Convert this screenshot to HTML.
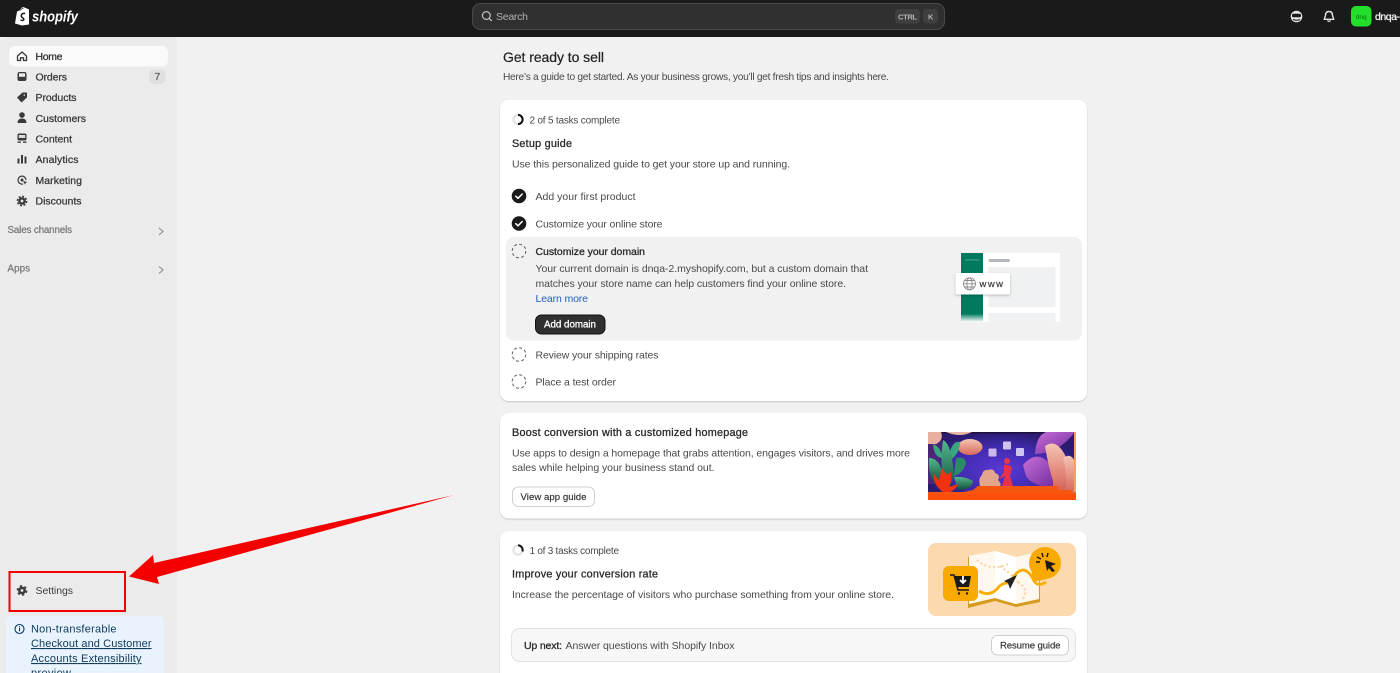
<!DOCTYPE html>
<html><head><meta charset="utf-8"><title>Shopify admin</title>
<style>
html,body{margin:0;padding:0;width:1400px;height:673px;overflow:hidden;background:#f1f1f1}
svg{display:block}
#root{filter:blur(.35px)}
text{font-family:"Liberation Sans",sans-serif;font-size:10.5px;fill:#303030}
.nav{fill:#3a3a3a;stroke:#3a3a3a;stroke-width:.28;font-size:10.5px}
.b{fill:#2a2a2a;stroke:#2a2a2a;stroke-width:.3}
.t{fill:#4a4a4a}
.cap{font-weight:700;fill:#b5b5b5;font-size:7.500px}
</style></head><body>
<svg id="root" width="1400" height="673" viewBox="0 0 1400 673" xmlns="http://www.w3.org/2000/svg">
<defs>
<linearGradient id="fade" x1="0" y1="0" x2="0" y2="1"><stop offset="0.88" stop-color="#007a5e"/><stop offset="1" stop-color="#007a5e" stop-opacity="0"/></linearGradient>
<radialGradient id="sky" cx="0.5" cy="0.55" r="0.55"><stop offset="0" stop-color="#5a38d8"/><stop offset="0.65" stop-color="#3e2aa8"/><stop offset="1" stop-color="#2a1b70"/></radialGradient>
<linearGradient id="petal" x1="0" y1="0" x2="0" y2="1"><stop offset="0" stop-color="#f3c4b4"/><stop offset="1" stop-color="#d9685c"/></linearGradient>
<linearGradient id="purp" x1="0" y1="0" x2="1" y2="1"><stop offset="0" stop-color="#c86fd8"/><stop offset="1" stop-color="#6d2a9c"/></linearGradient>
<linearGradient id="leaf" x1="0" y1="0" x2="0" y2="1"><stop offset="0" stop-color="#52b88c"/><stop offset="1" stop-color="#124a3a"/></linearGradient>
<filter id="sh" x="-10%" y="-10%" width="120%" height="125%"><feDropShadow dx="0" dy="1" stdDeviation="0.8" flood-color="#000" flood-opacity="0.18"/></filter>
<filter id="sh2" x="-10%" y="-20%" width="120%" height="150%"><feDropShadow dx="0" dy="1" stdDeviation="1.2" flood-color="#000" flood-opacity="0.25"/></filter>
</defs>

<!-- page -->
<rect width="1400" height="673" fill="#f1f1f1"/>
<rect width="1400" height="37" fill="#1a1a1a"/>
<path d="M0 46Q0 37 9 37H177V673H0Z" fill="#ebebeb"/>

<!-- logo -->
<path d="M15 23.500L17 11.500L20 10.200Q21.500 6.800 23.800 7.200L27 8.500L29 9.500V24.500L22 25.500Z" fill="#fff"/>
<path d="M20.500 10.500Q21.500 8.300 23.500 8.300" stroke="#1a1a1a" stroke-width=".7" fill="none"/>
<path d="M25.200 13.500Q22 13 21.300 15.300Q21 17 22.800 18Q24.300 18.900 23.600 20Q22.600 21 20.500 20" stroke="#1a1a1a" stroke-width="1.500" fill="none"/>
<text x="32" y="21.500" style="font-size:14.500px;font-weight:700;font-style:italic;fill:#fff" textLength="46" lengthAdjust="spacingAndGlyphs">shopify</text>

<!-- search -->
<rect x="472.500" y="3.500" width="472" height="26" rx="8" fill="#303030" stroke="#4a4a4a" stroke-width="1"/>
<circle cx="486.300" cy="15.500" r="3.900" fill="none" stroke="#c4c4c4" stroke-width="1.200"/>
<path d="M489.200 18.400L491.500 20.700" stroke="#c4c4c4" stroke-width="1.200" stroke-linecap="round"/>
<text x="496" y="20" style="fill:#b0b0b0;font-size:10.500px" textLength="32">Search</text>
<rect x="895" y="9" width="25" height="14.500" rx="3.500" fill="#3f3f3f"/>
<text x="898" y="19.500" class="cap" textLength="19">CTRL</text>
<rect x="923" y="9" width="15" height="14.500" rx="3.500" fill="#3f3f3f"/>
<text x="928" y="19.500" class="cap">K</text>

<!-- top right -->
<circle cx="1296.500" cy="16.500" r="5.800" fill="#e3e3e3"/>
<rect x="1292" y="13.800" width="9" height="3.400" rx="1.500" fill="#1a1a1a"/>
<path d="M1293 19.500Q1296.500 21 1300 19.500" stroke="#1a1a1a" stroke-width="1" fill="none"/>
<path d="M1329 11.500Q1332.500 11.500 1332.500 15.500L1333.800 19.300H1324.200L1325.500 15.500Q1325.500 11.500 1329 11.500Z" fill="none" stroke="#e3e3e3" stroke-width="1.400" stroke-linejoin="round"/>
<path d="M1327.400 20.500Q1329 22.300 1330.600 20.500" stroke="#e3e3e3" stroke-width="1.200" fill="none"/>
<rect x="1351" y="6" width="20.500" height="20.500" rx="5" fill="#22e02a"/>
<text x="1355.800" y="19" style="font-size:6.500px;fill:#0e6b16">dnq</text>
<text x="1375" y="20" style="fill:#f0f0f0;stroke:#f0f0f0;stroke-width:.3;font-size:10.500px" textLength="25">dnqa-</text>

<!-- sidebar nav -->
<rect x="9" y="46" width="159" height="20.500" rx="6" fill="#fafafa"/>
<g fill="#3a3a3a">
<path d="M17.500 56L22 52L26.500 56V60.500H23.500V57.800H20.500V60.500H17.500Z" fill="none" stroke="#3a3a3a" stroke-width="1.300" stroke-linejoin="round"/>
<path d="M17.500 74Q17.500 72 19.500 72H24.500Q26.500 72 26.500 74V79Q26.500 81 24.500 81H19.500Q17.500 81 17.500 79Z"/>
<rect x="19" y="73.300" width="6" height="3.500" fill="#ebebeb"/>
<path d="M17 97.500L22.500 92.500H27V97.500L21.500 102.500Z"/>
<circle cx="22" cy="115" r="2.800"/>
<path d="M17.500 123Q17.500 118.500 22 118.500Q26.500 118.500 26.500 123Z"/>
<rect x="17.500" y="133.500" width="9" height="7" rx="1.500"/>
<rect x="18.800" y="135" width="6.400" height="3" fill="#dcdcdc"/>
<rect x="17.500" y="141.500" width="3.500" height="1.300"/><rect x="23" y="141.500" width="3.500" height="1.300"/>
<rect x="17.500" y="158.500" width="2" height="5"/><rect x="21" y="155" width="2" height="8.500"/><rect x="24.500" y="156.500" width="2" height="7"/>
<path d="M26 180A4 4 0 1 0 23 184" fill="none" stroke="#3a3a3a" stroke-width="1.200"/>
<circle cx="22" cy="180" r="1.500"/><path d="M23 181L27.300 182L25.500 183L25 184.800Z"/>
<circle cx="22" cy="201" r="3.800"/>
<circle cx="22" cy="201" r="4.600" fill="none" stroke="#3a3a3a" stroke-width="1.500" stroke-dasharray="2 1.610"/>
</g>
<circle cx="24.300" cy="95" r="0.800" fill="#ebebeb"/>
<circle cx="22" cy="201" r="1.400" fill="#ebebeb"/>
<text x="35.500" y="60" class="nav" style="fill:#2c2c2c" textLength="27">Home</text>
<text x="35.500" y="80.500" class="nav" textLength="31.500">Orders</text>
<text x="35.500" y="101" class="nav" textLength="41">Products</text>
<text x="35.500" y="122" class="nav" textLength="50.500">Customers</text>
<text x="35.500" y="142.500" class="nav" textLength="36.500">Content</text>
<text x="35.500" y="163" class="nav" textLength="43">Analytics</text>
<text x="35.500" y="184" class="nav" textLength="46.500">Marketing</text>
<text x="35.500" y="204.500" class="nav" textLength="46">Discounts</text>
<rect x="149" y="69.500" width="16.500" height="14.500" rx="5" fill="#e0e0e0"/>
<text x="154.500" y="80" style="fill:#616161;stroke:#616161;stroke-width:.25">7</text>
<text x="7.500" y="233" style="fill:#7a7a7a;stroke:#7a7a7a;stroke-width:.25;font-size:9.800px" textLength="64.500">Sales channels</text>
<path d="M159 228L163 231.500L159 235" stroke="#8a8a8a" stroke-width="1.100" fill="none"/>
<text x="7.500" y="271.500" style="fill:#7a7a7a;stroke:#7a7a7a;stroke-width:.25;font-size:9.800px" textLength="22.500">Apps</text>
<path d="M159 266.500L163 270L159 273.500" stroke="#8a8a8a" stroke-width="1.100" fill="none"/>

<!-- settings -->
<circle cx="22" cy="590.500" r="3.900" fill="#3a3a3a"/>
<circle cx="22" cy="590.500" r="4.600" fill="none" stroke="#3a3a3a" stroke-width="1.500" stroke-dasharray="2.400 2.420"/>
<circle cx="22" cy="590.500" r="1.400" fill="#ebebeb"/>
<text x="35.500" y="594" style="fill:#3f3f3f" textLength="37.500">Settings</text>
<rect x="9.500" y="572" width="115.500" height="39" fill="none" stroke="#f00000" stroke-width="2"/>

<!-- banner -->
<path d="M6 622Q6 616 12 616H158Q164 616 164 622V673H6Z" fill="#e8f3fd"/>
<circle cx="19.500" cy="629" r="4.500" fill="none" stroke="#0b3a5c" stroke-width="1.100"/>
<rect x="19" y="628" width="1.100" height="3.300" fill="#0b3a5c"/><rect x="19" y="626.200" width="1.100" height="1.100" fill="#0b3a5c"/>
<text x="31" y="632.500" style="fill:#0e3a5a;font-size:11px" textLength="85.500">Non-transferable</text>
<text x="31" y="647" style="fill:#0e3a5a;font-size:11px;text-decoration:underline" textLength="120.500">Checkout and Customer</text>
<text x="31" y="662" style="fill:#0e3a5a;font-size:11px;text-decoration:underline" textLength="110.500">Accounts Extensibility</text>
<text x="31" y="676.500" style="fill:#0e3a5a;font-size:11px;text-decoration:underline" textLength="40">preview</text>

<!-- arrow -->
<path d="M454 495L154 563L153 555L129 576.500L159 584L157 577Z" fill="#f50000"/>

<!-- heading -->
<text x="503" y="62" style="font-size:14px;fill:#222;stroke:#222;stroke-width:.2" textLength="101">Get ready to sell</text>
<text x="503" y="80" class="t" style="font-size:10.200px" textLength="386">Here’s a guide to get started. As your business grows, you’ll get fresh tips and insights here.</text>

<!-- card 1 -->
<rect x="500" y="100" width="587" height="301" rx="9" fill="#fff" filter="url(#sh)"/>
<circle cx="518" cy="119.500" r="4.600" fill="none" stroke="#e2e2e2" stroke-width="2"/>
<path d="M518 114.900A4.600 4.600 0 0 1 518 124.100" fill="none" stroke="#111" stroke-width="2"/>
<text x="529.500" y="123.500" class="t" style="font-size:10px" textLength="90.500">2 of 5 tasks complete</text>
<text x="512" y="147" class="b" style="font-size:10.800px" textLength="60">Setup guide</text>
<text x="512" y="167.500" class="t" textLength="278">Use this personalized guide to get your store up and running.</text>

<circle cx="519" cy="196" r="7.300" fill="#1a1a1a"/>
<path d="M515.800 196.200L518 198.300L522.200 194" stroke="#fff" stroke-width="1.500" fill="none" stroke-linecap="round" stroke-linejoin="round"/>
<text x="535.500" y="200" class="t" textLength="100">Add your first product</text>
<circle cx="519" cy="223.500" r="7.300" fill="#1a1a1a"/>
<path d="M515.800 223.700L518 225.800L522.200 221.500" stroke="#fff" stroke-width="1.500" fill="none" stroke-linecap="round" stroke-linejoin="round"/>
<text x="535.500" y="227.500" class="t" textLength="127">Customize your online store</text>

<rect x="506" y="237" width="576" height="103.500" rx="8" fill="#f1f1f1"/>
<circle cx="519" cy="251" r="6.800" fill="none" stroke="#616161" stroke-width="1" stroke-dasharray="3 2.340"/>
<text x="535.500" y="255" class="b" style="font-size:10.500px" textLength="109.500">Customize your domain</text>
<text x="535.500" y="272" class="t" textLength="332.500">Your current domain is dnqa-2.myshopify.com, but a custom domain that</text>
<text x="535.500" y="287" class="t" textLength="310.500">matches your store name can help customers find your online store.</text>
<text x="535.500" y="302" style="fill:#1f5fc4" textLength="52.500">Learn more</text>
<rect x="535.500" y="315" width="69.500" height="19" rx="6" fill="#303030" stroke="#111" stroke-width="1"/>
<text x="544" y="327.500" style="fill:#fff;stroke:#fff;stroke-width:.3;font-size:9.800px" textLength="52">Add domain</text>

<!-- domain illustration -->
<rect x="961" y="253" width="99" height="69" fill="#fff"/>
<rect x="961" y="253" width="22" height="69" fill="url(#fade)"/>
<rect x="965" y="259.500" width="14" height="0.800" fill="#5fb09a"/>
<rect x="988.500" y="259" width="21.500" height="3" rx="1.500" fill="#b5b8bc"/>
<rect x="988.500" y="267" width="67" height="40" fill="#f0f1f2"/>
<rect x="988.500" y="313" width="67" height="9" fill="#f0f1f2"/>
<rect x="955.500" y="273" width="54.500" height="21.500" rx="1.500" fill="#fff" filter="url(#sh2)"/>
<g fill="none" stroke="#8a8a8a" stroke-width=".9">
<circle cx="969.500" cy="283.800" r="6"/><ellipse cx="969.500" cy="283.800" rx="2.600" ry="6"/><path d="M963.500 283.800H975.500M964.500 280.500H974.500M964.500 287H974.500"/>
</g>
<text x="979.500" y="287" style="font-size:9.500px;fill:#3a3a3a;stroke:#3a3a3a;stroke-width:.2" textLength="23.500">www</text>

<circle cx="519" cy="354.500" r="6.800" fill="none" stroke="#616161" stroke-width="1" stroke-dasharray="3 2.340"/>
<text x="535.500" y="358.500" class="t" textLength="123">Review your shipping rates</text>
<circle cx="519" cy="381.500" r="6.800" fill="none" stroke="#616161" stroke-width="1" stroke-dasharray="3 2.340"/>
<text x="535.500" y="385.500" class="t" textLength="80.500">Place a test order</text>

<!-- card 2 -->
<rect x="500" y="413" width="587" height="105.500" rx="9" fill="#fff" filter="url(#sh)"/>
<text x="512" y="436" class="b" style="font-size:10.800px" textLength="236">Boost conversion with a customized homepage</text>
<text x="512" y="456.500" class="t" textLength="398">Use apps to design a homepage that grabs attention, engages visitors, and drives more</text>
<text x="512" y="471" class="t" textLength="202.500">sales while helping your business stand out.</text>
<rect x="512.500" y="487" width="82" height="19.500" rx="6" fill="#fff" stroke="#cfcfcf" stroke-width="1"/>
<text x="520.500" y="500" style="fill:#303030;stroke:#303030;stroke-width:.15;font-size:9.600px" textLength="66">View app guide</text>

<!-- homepage illustration -->
<svg x="928" y="432" width="148" height="68" viewBox="0 0 148 68">
<rect width="148" height="68" fill="url(#sky)"/>
<rect width="148" height="1.500" fill="#201040"/>
<path d="M0 0V52H6Q14 30 14 8L10 0Z" fill="#5a2a78" opacity=".7"/>
<path d="M0 0H13Q16 8 8 12H0Z" fill="#eab09f"/>
<path d="M18 0Q32 6 44 0Z" fill="#e9b9a6"/>
<ellipse cx="42" cy="15" rx="12.500" ry="8" fill="url(#petal)"/>
<path d="M15 8Q24 12 26 44L20 60Q10 40 15 8Z" fill="url(#leaf)"/>
<path d="M1 26Q12 26 15 44Q17 56 6 50Q0 42 1 26Z" fill="url(#leaf)"/>
<path d="M22 19Q26 8 32 10Q32 20 24 27Z" fill="#3ba57f"/>
<path d="M5 12Q12 14 15 26Q6 26 5 12Z" fill="#3ba57f"/>
<path d="M26 45Q37 44 45 49Q44 58 30 58Z" fill="url(#leaf)"/>
<path d="M28 26Q38 24 38 32Q34 42 26 44Z" fill="#2b8a68"/>
<path d="M16 61Q4 52 6 42L11 48L14 36L19 43L23 40Q24 50 21 55L30 52Q27 60 16 62Z" fill="#f0320e"/>
<path d="M52 54Q50 46 54 43Q55 37 60 38Q66 36 67 41Q73 43 70 48Q74 52 72 54Z" fill="#e3a58c"/>
<rect x="60.500" y="16.500" width="8" height="8" rx="1" fill="#c9b8ec"/>
<rect x="75" y="9.500" width="8" height="8" rx="1" fill="#cfc0f0"/>
<rect x="88" y="16" width="8" height="8" rx="1" fill="#d0c4f0"/>
<circle cx="79" cy="29" r="3" fill="#e8374a"/>
<path d="M76 33Q82 32 84 36L82 44L85 54H74L77 44L71 47L76 40Z" fill="#e9324a"/>
<path d="M107 22Q130 22 147 0H118Q108 4 107 22Z" fill="url(#purp)"/>
<path d="M95 33Q108 18 120 30Q132 46 126 56Q104 54 98 44Z" fill="url(#purp)"/>
<rect x="125" y="50" width="23" height="12" fill="#d9685c"/>
<path d="M117 14Q128 6 137 23Q145 40 140 56H127Q120 34 117 14Z" fill="url(#petal)"/>
<path d="M135 26Q143 20 147 30V60H138Q139 40 135 26Z" fill="url(#petal)"/>
<rect x="146" width="2" height="60" fill="#f6a160"/>
<path d="M50 54H130V58H144V61H148V68H0V60H36L45 58Z" fill="#f7560f"/>
<rect y="62" width="148" height="6" fill="#ff4d0a"/>
</svg>

<!-- card 3 -->
<rect x="500" y="531" width="587" height="150" rx="9" fill="#fff" filter="url(#sh)"/>
<circle cx="518" cy="550" r="4.600" fill="none" stroke="#e2e2e2" stroke-width="2"/>
<path d="M518 545.400A4.600 4.600 0 0 1 522.400 551.500" fill="none" stroke="#111" stroke-width="2"/>
<text x="529.500" y="554" class="t" style="font-size:10px" textLength="89.500">1 of 3 tasks complete</text>
<text x="512" y="577.500" class="b" style="font-size:10.800px" textLength="146">Improve your conversion rate</text>
<text x="512" y="598" class="t" textLength="382">Increase the percentage of visitors who purchase something from your online store.</text>

<!-- map illustration -->
<rect x="928" y="543" width="148" height="73" rx="8" fill="#fcd9ae"/>
<path d="M968 557L995 552L1016 558L1040 553V602L1016 607L995 601L968 608Z" fill="#d69b1e"/>
<path d="M969 556L995 551L1016 557L1039 552V599L1016 604L995 598L969 604Z" fill="#fff8ee"/>
<path d="M995 551L1016 557V604L995 598Z" fill="#fff"/>
<g fill="none" stroke="#f6d3a7" stroke-width="2" stroke-dasharray="2 2.500"><path d="M977 560Q990 572 1008 564M1018 582Q1030 590 1022 600M1000 566Q1014 576 1018 582"/></g>
<path d="M979 591Q989 597 997 589Q1002 582 1010 583M1010 583Q1016 570 1024 570Q1030 572 1033 579Q1037 588 1046 582" fill="none" stroke="#f7ae00" stroke-width="2.800"/>
<path d="M1004 581L1017 575L1010 589L1008 583Z" fill="#222"/>
<rect x="943" y="566" width="35" height="35" rx="6" fill="#f9aa00"/>
<path d="M950 575H954L958 590H969" stroke="#1a1a1a" stroke-width="1.500" fill="none"/>
<path d="M954 576H971L969 587H957Z" fill="#1a1a1a"/>
<path d="M963 576V582M960 580L963 583L966 580" stroke="#fff" stroke-width="1.800" fill="none"/>
<circle cx="959" cy="593.500" r="1.200" fill="#1a1a1a"/><circle cx="967" cy="593.500" r="1.200" fill="#1a1a1a"/>
<path d="M1031 566L1033 582L1047 579Z" fill="#f9aa00"/>
<circle cx="1045" cy="563" r="16" fill="#f9aa00"/>
<path d="M1045 560L1056 564L1051 566L1055 571L1052 572L1049 568L1047 571Z" fill="#1a1a1a"/>
<path d="M1037 557L1041 559M1036 562H1040M1042 553L1043 557M1048 553L1047 557" stroke="#1a1a1a" stroke-width="1.500"/>

<rect x="511.500" y="628.500" width="564" height="33" rx="8" fill="#f7f7f7" stroke="#e3e3e3" stroke-width="1"/>
<text x="524" y="649" class="b" style="font-size:10.500px" textLength="38">Up next:</text>
<text x="565.500" y="649" class="t" textLength="169">Answer questions with Shopify Inbox</text>
<rect x="991.500" y="635.500" width="77" height="19.500" rx="6" fill="#fff" stroke="#cfcfcf" stroke-width="1"/>
<text x="1000" y="648.500" style="fill:#303030;stroke:#303030;stroke-width:.15;font-size:9.600px" textLength="60.500">Resume guide</text>
</svg>
</body></html>
